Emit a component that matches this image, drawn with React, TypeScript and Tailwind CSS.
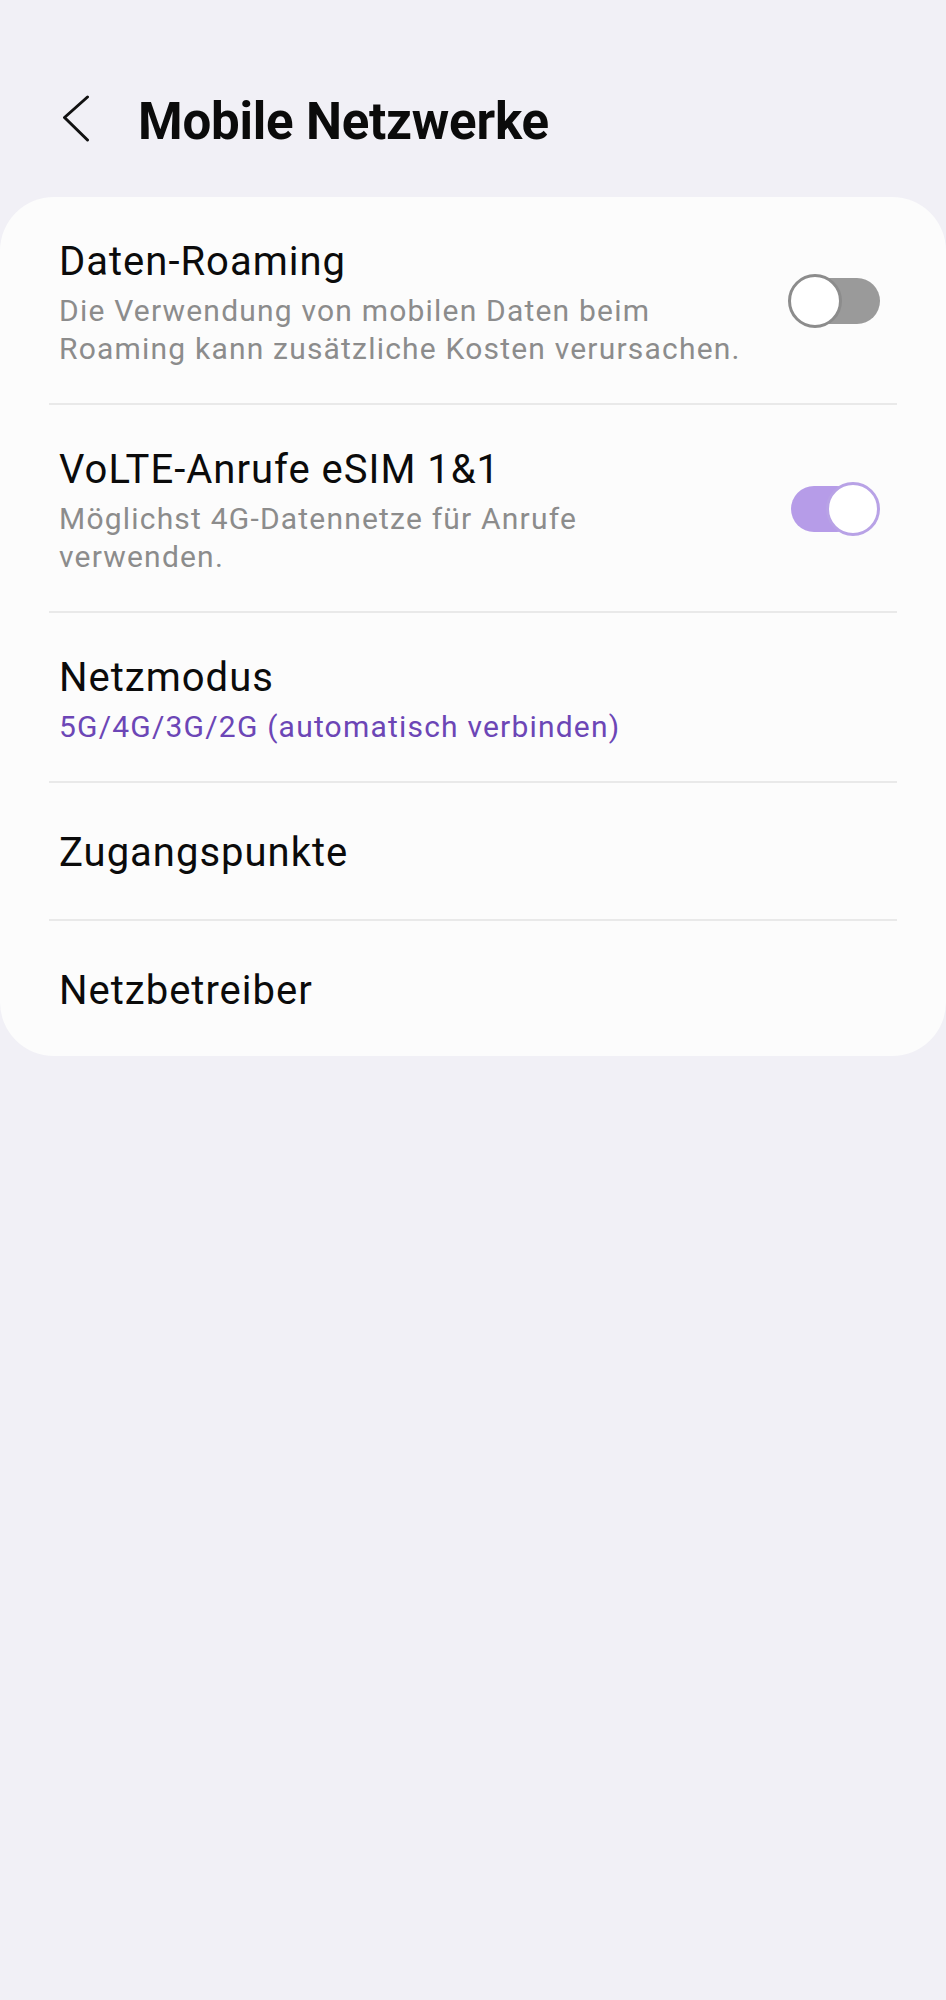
import React, { useState } from 'react';

type ToggleProps = { on: boolean; onChange: () => void };

const Toggle: React.FC<ToggleProps> = ({ on, onChange }) => (
  <button
    type="button"
    onClick={onChange}
    className="relative w-[92px] h-[54px] mb-[5px] shrink-0"
    aria-pressed={on}
  >
    {on ? (
      <>
        <span className="absolute left-[3px] right-[20px] top-[4px] bottom-[4px] rounded-full bg-[#b69ce8]" />
        <span className="absolute right-0 top-0 w-[54px] h-[54px] rounded-full bg-white border-[3px] border-[#b8a2e6]" />
      </>
    ) : (
      <>
        <span className="absolute left-[16px] right-0 top-[4px] bottom-[4px] rounded-full bg-[#9a9a9a]" />
        <span className="absolute left-0 top-0 w-[54px] h-[54px] rounded-full bg-white border-[3px] border-[#8c8c8c]" />
      </>
    )}
  </button>
);

const Divider = () => <div className="mx-[49px] h-[2px] bg-[#e9e9e9]" />;

export default function App() {
  const [roaming, setRoaming] = useState(false);
  const [volte, setVolte] = useState(true);

  return (
    <div className="min-h-[2000px] bg-[#f1f0f6] font-['Roboto',sans-serif] text-[#0b0b0b]">
      {/* Header */}
      <div className="flex items-start pt-[92px] pb-[45px] pl-[62px]">
        <svg width="28" height="48" viewBox="0 0 28 48" className="mt-[3px] shrink-0" fill="none">
          <path d="M25.5 2 L2.5 22.5 L25.5 45" stroke="#111" strokeWidth="3" strokeLinecap="round" strokeLinejoin="round" />
        </svg>
        <h1 className="ml-[48px] text-[51px] leading-[60px] font-bold tracking-[-0.2px]">Mobile Netzwerke</h1>
      </div>

      {/* Settings card */}
      <div className="bg-[#fcfcfc] rounded-[54px]">
        <div className="flex items-center pl-[59px] pr-[66px] pt-[42px] pb-[35px]">
          <div className="flex-1 flex flex-col gap-[7px]">
            <div className="text-[40px] leading-[46px] tracking-[1px]">Daten-Roaming</div>
            <div className="text-[30px] leading-[38px] tracking-[1.2px] text-[#8c8c8c] max-w-[700px]">
              Die Verwendung von mobilen Daten beim Roaming kann zusätzliche Kosten verursachen.
            </div>
          </div>
          <Toggle on={roaming} onChange={() => setRoaming(!roaming)} />
        </div>
        <Divider />
        <div className="flex items-center pl-[59px] pr-[66px] pt-[42px] pb-[35px]">
          <div className="flex-1 flex flex-col gap-[7px]">
            <div className="text-[40px] leading-[46px] tracking-[1px]">VoLTE-Anrufe eSIM 1&amp;1</div>
            <div className="text-[30px] leading-[38px] tracking-[1.2px] text-[#8c8c8c] max-w-[560px]">
              Möglichst 4G-Datennetze für Anrufe verwenden.
            </div>
          </div>
          <Toggle on={volte} onChange={() => setVolte(!volte)} />
        </div>
        <Divider />
        <div className="flex flex-col gap-[7px] pl-[59px] pr-[66px] pt-[42px] pb-[35px]">
          <div className="text-[40px] leading-[46px] tracking-[1px]">Netzmodus</div>
          <div className="text-[30px] leading-[38px] tracking-[1.2px] text-[#6c46b6]">5G/4G/3G/2G (automatisch verbinden)</div>
        </div>
        <Divider />
        <div className="pl-[59px] pr-[66px] pt-[47px] pb-[43px] text-[40px] leading-[46px] tracking-[1px]">Zugangspunkte</div>
        <Divider />
        <div className="pl-[59px] pr-[66px] pt-[47px] pb-[42px] text-[40px] leading-[46px] tracking-[1px]">Netzbetreiber</div>
      </div>
    </div>
  );
}
